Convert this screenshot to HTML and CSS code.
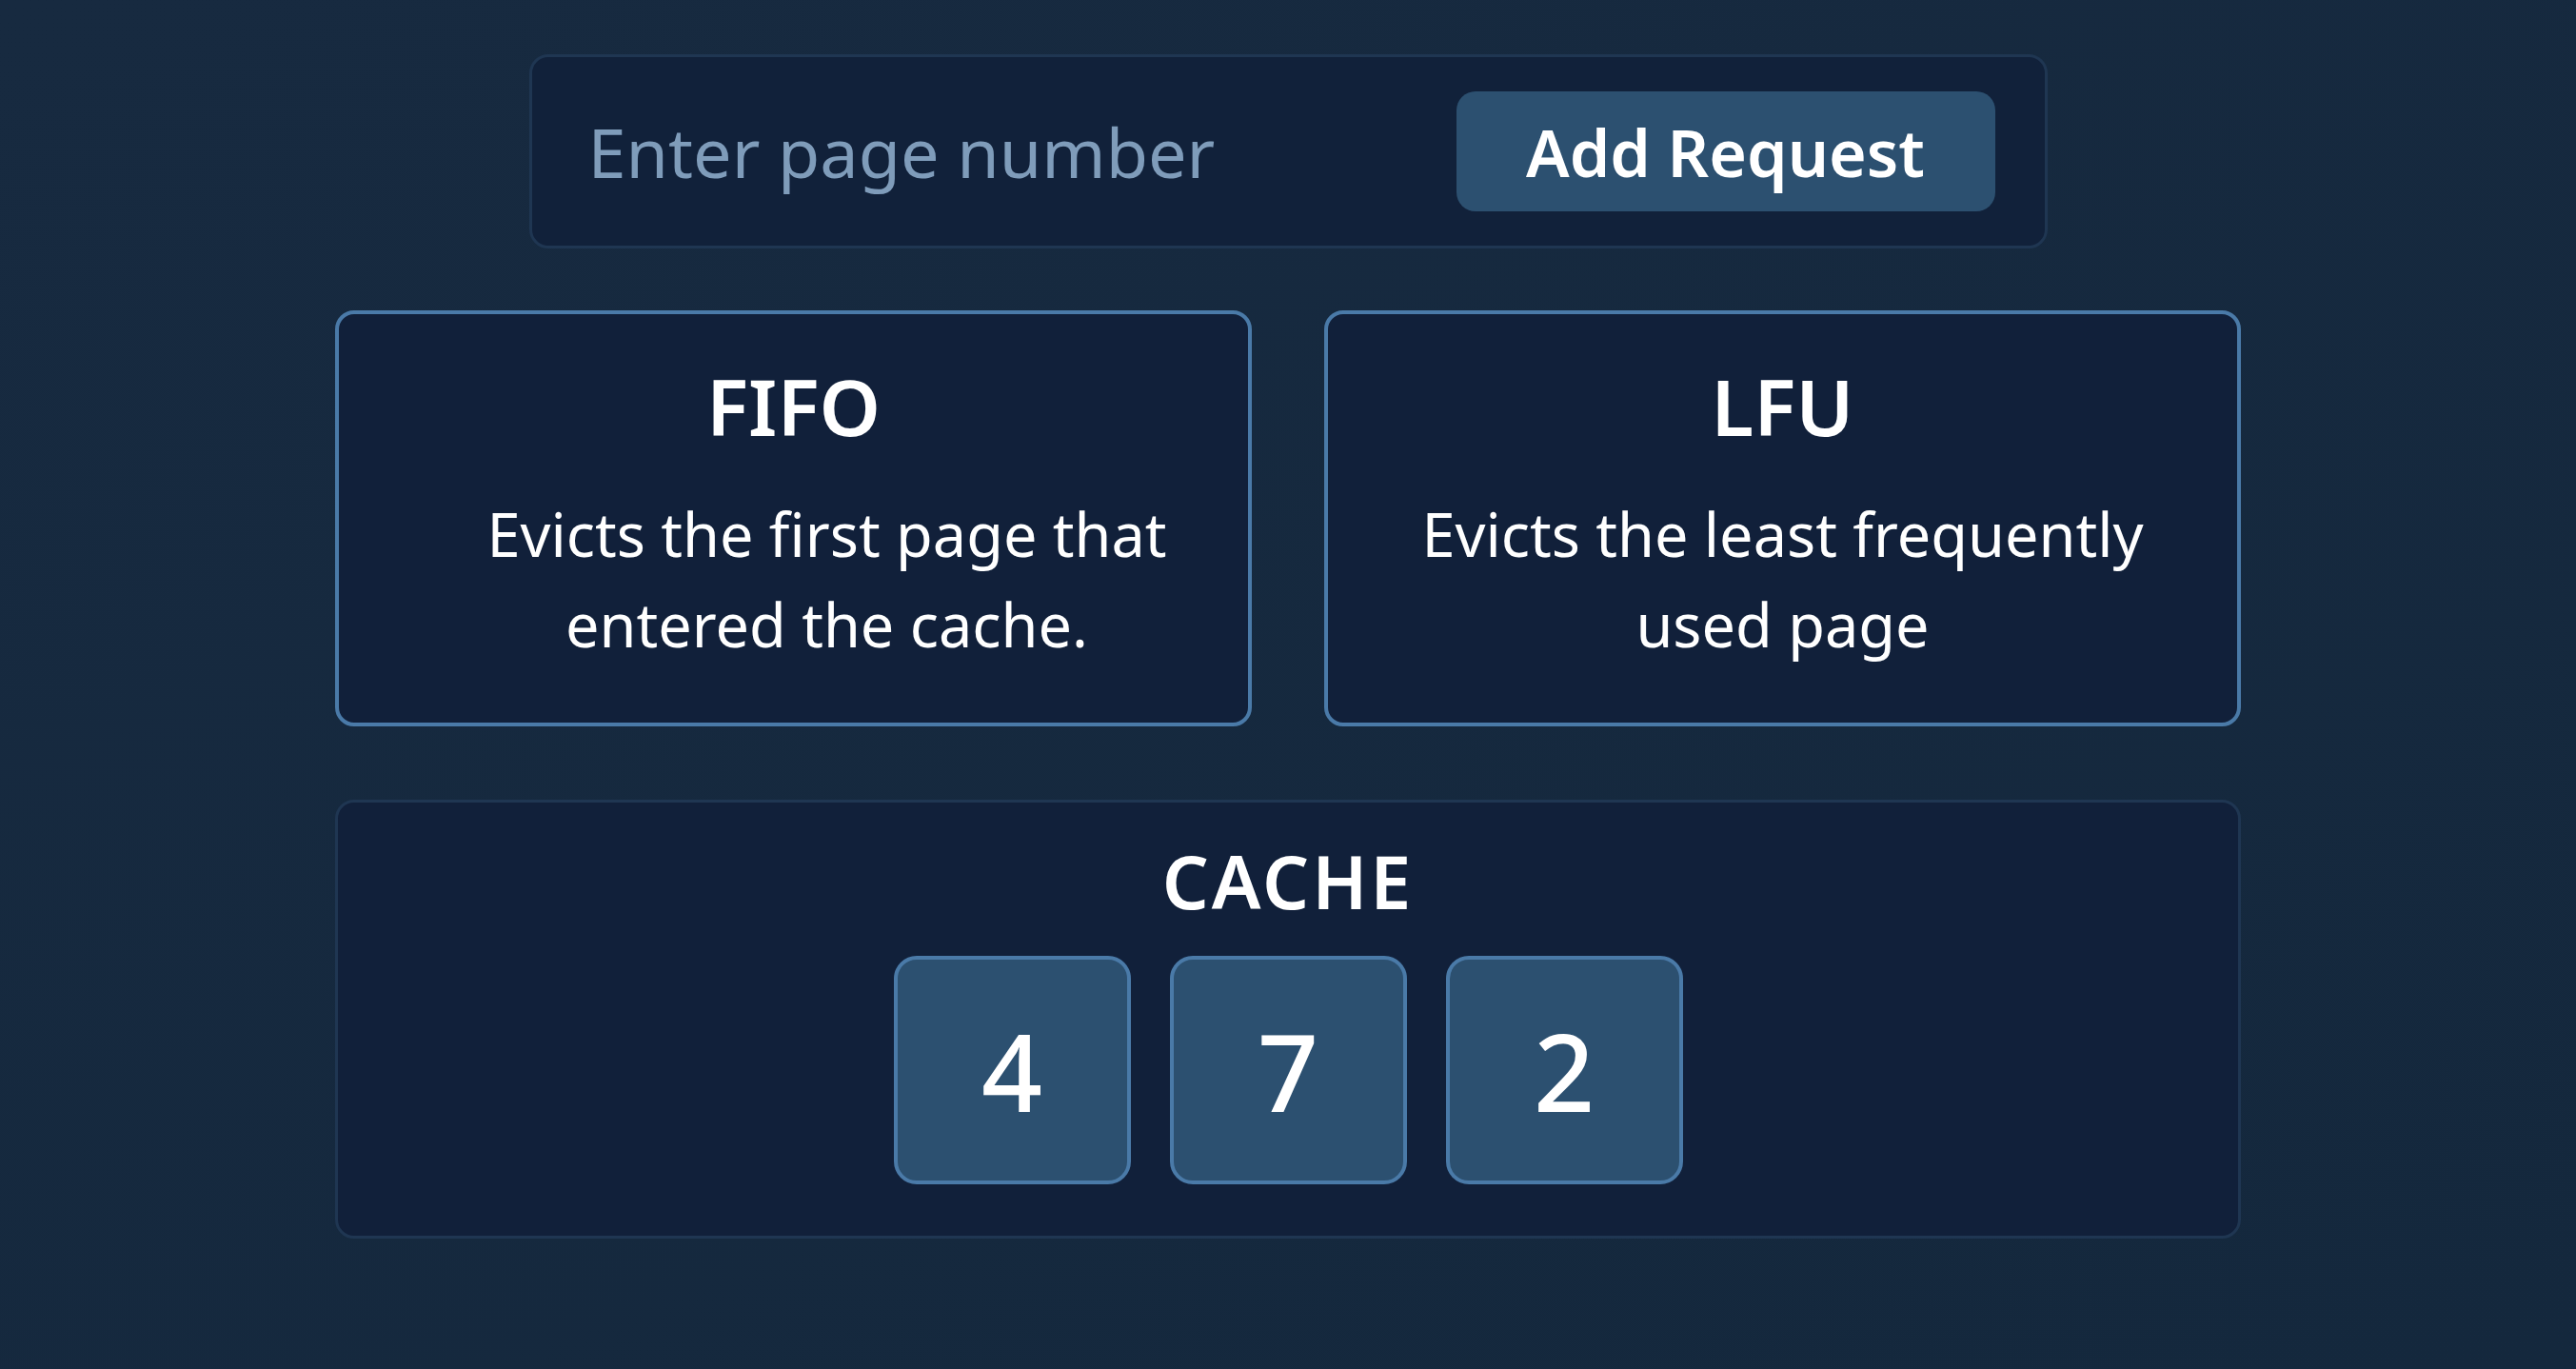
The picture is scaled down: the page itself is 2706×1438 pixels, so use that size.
FILE: index.html
```html
<!DOCTYPE html>
<html lang="en">
<head>
    <meta charset="UTF-8">
    <meta name="viewport" content="width=device-width, initial-scale=1.0">
    <title>Page Replacement</title>
    <link rel="stylesheet" href="styles.css">
</head>
<body>
    <div class="request-bar">
        <input type="text" id="pageInput" placeholder="Enter page number">
        <button type="button">Add Request</button>
    </div>

    <div class="policies">
        <div class="policy-card">
            <h2>FIFO</h2>
            <p class="shifted">Evicts the first page that entered the cache.</p>
        </div>
        <div class="policy-card">
            <h2>LFU</h2>
            <p>Evicts the least frequently used page</p>
        </div>
    </div>

    <div class="cache-panel">
        <h3>CACHE</h3>
        <div class="cache-slots">
            <div class="slot">4</div>
            <div class="slot">7</div>
            <div class="slot">2</div>
        </div>
    </div>
</body>
</html>
```

FILE: styles.css
```css
body {
    margin: 0;
    padding: 57px 0 0;
    font-family: "Noto Sans", Lato, sans-serif;
    background: linear-gradient(160deg, #172a40, #14283d);
    color: #ffffff;
    display: flex;
    flex-direction: column;
    align-items: center;
    height: 100vh;
    box-sizing: border-box;
}

.request-bar {
    width: 1595px;
    height: 204px;
    box-sizing: border-box;
    display: flex;
    align-items: center;
    justify-content: space-between;
    padding: 0 52px 0 59px;
    background-color: #11213a;
    border: 3px solid #1f3652;
    border-radius: 20px;
}

.request-bar input {
    flex: 1;
    min-width: 0;
    background: transparent;
    border: none;
    outline: none;
    font-family: inherit;
    font-size: 72px;
    color: #ffffff;
    padding: 0;
}

.request-bar input::placeholder {
    color: #7f9cba;
}

.request-bar button {
    flex-shrink: 0;
    width: 566px;
    height: 126px;
    background-color: #2c5070;
    color: #ffffff;
    border: none;
    border-radius: 20px;
    font-family: inherit;
    font-size: 68px;
    font-weight: 600;
    cursor: pointer;
}

.policies {
    display: flex;
    gap: 76px;
    margin-top: 65px;
}

.policy-card {
    width: 963px;
    height: 437px;
    box-sizing: border-box;
    background-color: #11203a;
    border: 4px solid #4a7aa8;
    border-radius: 20px;
    text-align: center;
    padding: 47px 50px 0;
}

.policy-card h2 {
    margin: 0;
    font-size: 82px;
    font-weight: 600;
    line-height: 1.2;
}

.policy-card p {
    margin: 38px 0 0;
    font-size: 63px;
    line-height: 95px;
}

.policy-card p.shifted {
    padding-left: 70px;
}

.cache-panel {
    width: 2002px;
    height: 461px;
    box-sizing: border-box;
    margin-top: 77px;
    background-color: #11203a;
    border: 3px solid #1f3652;
    border-radius: 20px;
    display: flex;
    flex-direction: column;
    align-items: center;
    padding-top: 37px;
}

.cache-panel h3 {
    margin: 0;
    font-size: 77px;
    font-weight: 600;
    letter-spacing: 3px;
    line-height: 1.2;
}

.cache-slots {
    display: flex;
    gap: 41px;
    margin-top: 32px;
}

.slot {
    width: 249px;
    height: 240px;
    box-sizing: border-box;
    background-color: #2c5070;
    border: 4px solid #4a7aa8;
    border-radius: 24px;
    display: flex;
    align-items: center;
    justify-content: center;
    font-size: 112px;
    font-weight: 500;
}
```
